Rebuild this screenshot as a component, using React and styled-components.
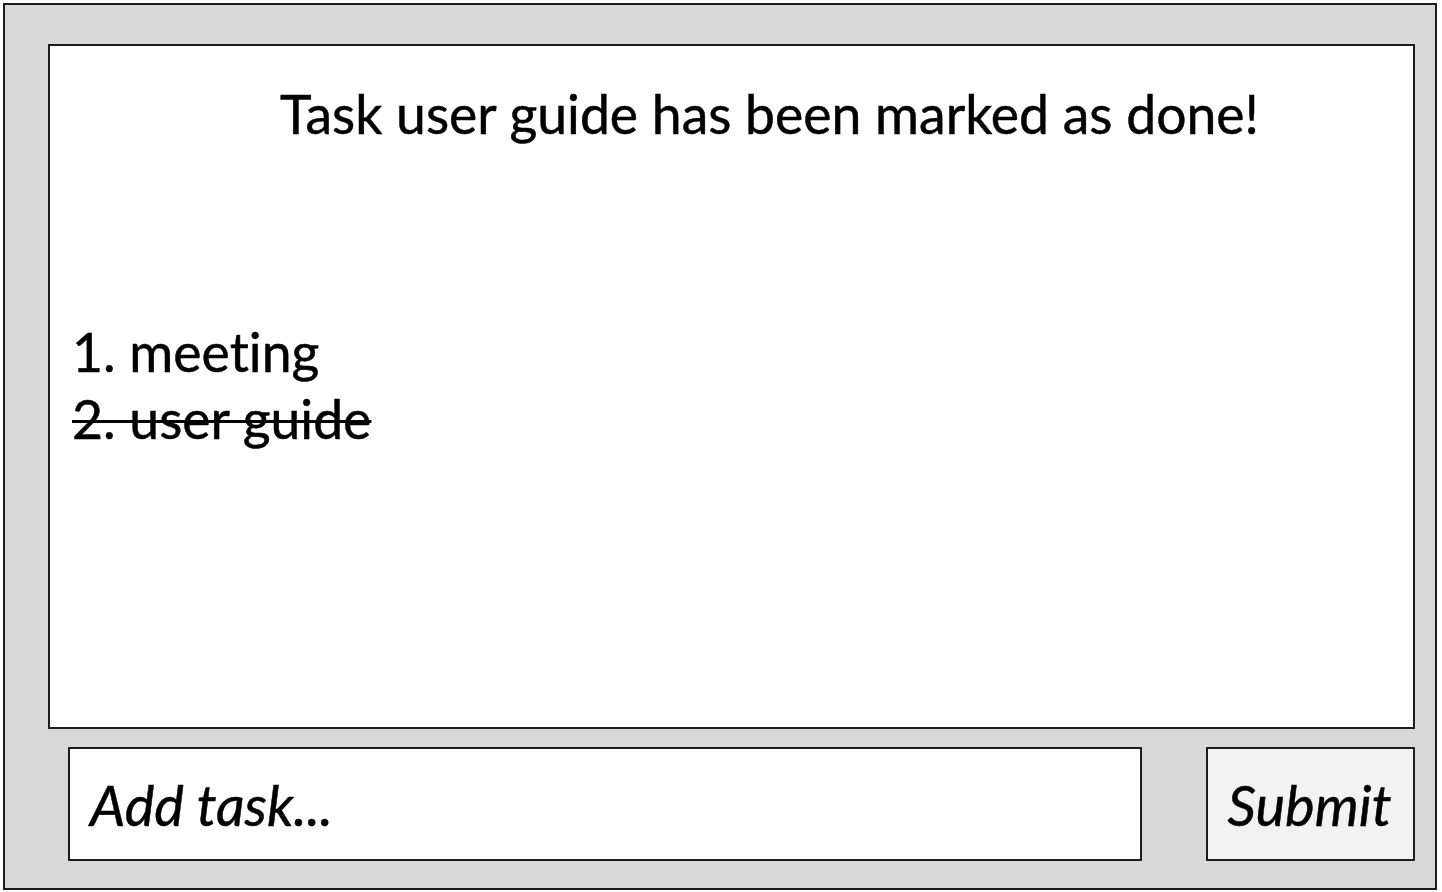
import React from "react";
import styled, { createGlobalStyle } from "styled-components";

const Global = createGlobalStyle`
  html, body { margin: 0; padding: 0; background: #ffffff; }
  body {
    font-family: Lato, "Open Sans", sans-serif;
    color: #000;
    font-variant-ligatures: none;
    font-feature-settings: "liga" 0;
  }
  * { box-sizing: border-box; }
`;

const Frame = styled.div`
  margin: 3px 0 0 3px;
  width: 1434px;
  height: 887px;
  border: 2px solid #1c1c1c;
  background: #d9d9d9;
  padding: 39px 20px 27px 43px;
  display: flex;
  flex-direction: column;
`;

const Panel = styled.div`
  width: 1367px;
  height: 685px;
  border: 2px solid #1c1c1c;
  background: #ffffff;
  display: flex;
  flex-direction: column;
  padding: 32px 22px 0 22px;
`;

const Message = styled.div`
  font-size: 53.5px;
  line-height: 70px;
  padding-left: 208px;
  -webkit-text-stroke: 0.5px #000;
`;

const TaskList = styled.ol`
  list-style: none;
  margin: 170px 0 0 0;
  padding: 0;
`;

const TaskItem = styled.li`
  font-size: 53.5px;
  line-height: 67px;
  -webkit-text-stroke: 0.5px #000;
  text-decoration: ${(p) => (p.$done ? "line-through" : "none")};
  text-decoration-thickness: 3px;
`;

const Bottom = styled.div`
  margin-top: 18px;
  padding-left: 20px;
  display: flex;
  gap: 64px;
`;

const Input = styled.div`
  width: 1074px;
  height: 114px;
  border: 2px solid #1c1c1c;
  background: #ffffff;
  display: flex;
  align-items: center;
  padding-left: 20px;
  font-size: 56px;
  font-style: italic;
  -webkit-text-stroke: 0.5px #000;
`;

const Button = styled.div`
  width: 209px;
  height: 114px;
  border: 2px solid #1c1c1c;
  background: #f2f2f2;
  display: flex;
  align-items: center;
  justify-content: center;
  padding-right: 2px;
  font-size: 56px;
  font-style: italic;
  -webkit-text-stroke: 0.5px #000;
`;

export default function App() {
  return (
    <>
      <Global />
      <Frame>
        <Panel>
          <Message>Task user guide has been marked as done!</Message>
          <TaskList>
            <TaskItem>1. meeting</TaskItem>
            <TaskItem $done>2. user guide</TaskItem>
          </TaskList>
        </Panel>
        <Bottom>
          <Input>Add task...</Input>
          <Button>Submit</Button>
        </Bottom>
      </Frame>
    </>
  );
}
